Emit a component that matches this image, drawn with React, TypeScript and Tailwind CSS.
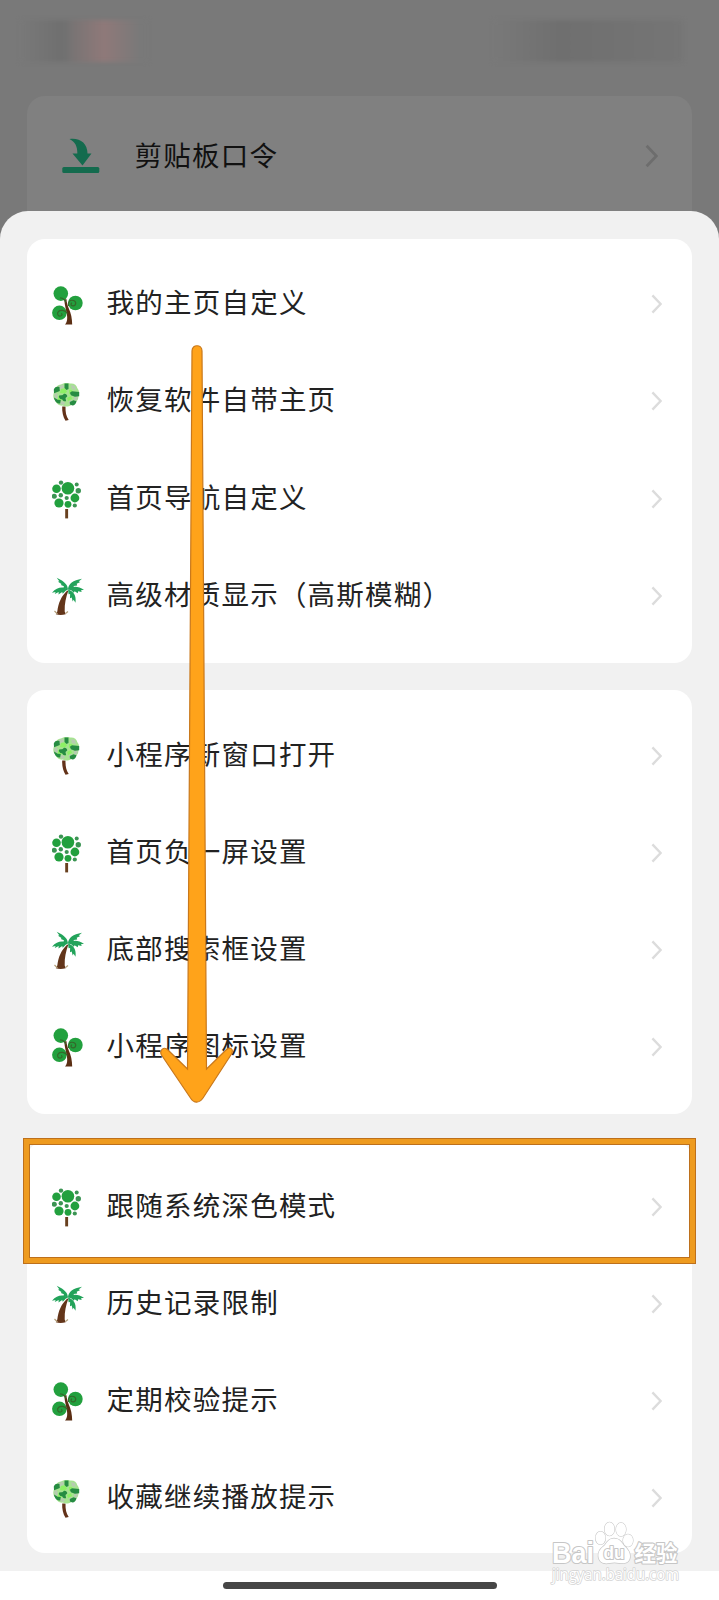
import React from 'react';

type TreeKind = 'sprout' | 'leafy' | 'dots' | 'palm';

interface MenuItem {
    icon: TreeKind;
    label: string;
}

const groups: MenuItem[][] = [
    [
        { icon: 'sprout', label: '我的主页自定义' },
        { icon: 'leafy', label: '恢复软件自带主页' },
        { icon: 'dots', label: '首页导航自定义' },
        { icon: 'palm', label: '高级材质显示（高斯模糊）' },
    ],
    [
        { icon: 'leafy', label: '小程序新窗口打开' },
        { icon: 'dots', label: '首页负一屏设置' },
        { icon: 'palm', label: '底部搜索框设置' },
        { icon: 'sprout', label: '小程序图标设置' },
    ],
    [
        { icon: 'dots', label: '跟随系统深色模式' },
        { icon: 'palm', label: '历史记录限制' },
        { icon: 'sprout', label: '定期校验提示' },
        { icon: 'leafy', label: '收藏继续播放提示' },
    ],
];

const SproutTree = () => (
    <>
        <circle cx="8.8" cy="7.600" r="7.300" fill="#22a03e" />
        <circle cx="23.400" cy="17" r="7.300" fill="#22a03e" />
        <circle cx="7.400" cy="26.800" r="7.300" fill="#22a03e" />
        <path d="M13 38.600c2.600-3 2.400-7 1.900-10.200-.6-4-2.400-9.500-2.600-15.200h2.200c.2 3.500 1 5.800 2 8.500 2.700 6 3.600 10.500 3.700 16.900z" fill="#5b2f14" />
        <path d="M13.600 16.500c-.5-3-2.500-4.500-5.500-4.700M16.500 20c-1-4 1.500-6.500 5-5.500s2.500 5.500-.5 5.300-2-2.500-1-3M15.500 27.500c-2.500-3.500-7-4-9-2s-.5 5 2 4.500 1.500-2.500.5-2.500" fill="none" stroke="#34692a" strokeWidth="1.200" />
    </>
);

const LeafyTree = () => (
    <>
        <path d="M10.200 23.500c-.3 5.500.9 10.500 3.300 14.200l3.200-.6c-2.600-4-3.300-8-3.200-13.600z" fill="#633219" />
        <path d="M9 1.500c3-1.900 7-1.900 9-.9 4-.5 6.700 1.500 7.200 4.300 2.300 2.500 2.300 6 1.200 8.500.1 4-2.500 6.500-5.900 7.500-3 3-7.300 3.200-9.700 1.700-3.800.3-6.800-2-7.300-5-2.700-2-2.700-6-1.300-8.700C2.200 5 5.300 2 9 1.500z" fill="#a6e391" />
        <path d="M6 3.500l5-2 1 3-4 2zM19 2l4 1 1 4-4-1zM2 11l3-1 1 5-3 1zM22 14l4-1-1 4-3 1zM9 18l4 1-1 3-4-1zM17 18l3-1 0 3-3 1z" fill="#b6ccb0" />
        <path d="M9 6l4-.5 2 3-2 2-5-.5zM17 7l3 0 1 3-4 1zM6 13l3 1 1 3-4 0zM15 15l4-2 1 3-4 2z" fill="#8df065" />
        <path d="M1.800 6.500c1-2.500 3-3 5.700-2.500l.3 4-5.800 2.200zM12.500.500l4-.1v5.600l-2 1.100-2-2zM7 12.800c1.200-1 3.700 0 4.700-1.900 2.400-.5 3.800 1.200 3.500 2.600l-1.700 1.500.6 3.200c-1.900.5-3.700-.7-4-2-2.200.3-3.600-1.600-3.100-3.400zM20 8.200l7.200.8v4.200l-4.300.5-4-1.500-1-2.500zM17.800 19l3.700-1.800 3 1c-.5 2.500-1.900 4.100-4.100 4.300l-2.500-1zM2 14.500l3.800 2.300 3 .2-.6 3.600c-3.200 0-5.700-2.200-6.200-6.100z" fill="#268c42" />
    </>
);

const DotsTree = () => (
    <>
        <path d="M13.200 29h2.900v9.400h-2.900z" fill="#68401f" />
        <g fill="#22a03e">
            <circle cx="15.900" cy="8.300" r="6.300" />
            <circle cx="4.500" cy="8.700" r="4.300" />
            <circle cx="22.900" cy="18" r="4.400" />
            <circle cx="7" cy="23" r="4.600" />
            <circle cx="16" cy="24.300" r="3.400" />
        </g>
        <g fill="#3b9453">
            <circle cx="9" cy="2.600" r="2.200" />
            <circle cx="24.700" cy="4.600" r="2" />
            <circle cx="26.300" cy="10.800" r="2.700" />
            <circle cx="2.300" cy="16.300" r="2.500" />
            <circle cx="8.800" cy="15.300" r="2.200" />
            <circle cx="14.700" cy="18" r="2.100" />
            <circle cx="22.800" cy="25.500" r="2.100" />
        </g>
    </>
);

const PalmTree = () => (
    <>
        <path d="M15.300 13.500c-6 5.500-9 12.500-10 21l-1.500 2.700c3.200 1 6.600.9 9.900 0l-1-2.700c-.3-8 1.300-14 3.500-20.500z" fill="#63351a" />
        <path d="M2.500 34l3 3M16 34.500l-2.500 2" stroke="#b5a07c" strokeWidth="1.200" />
        <g fill="#22a35a">
            <path d="M16 12.500c-.3-4.500-3-8-11.300-11.800l2.600 3.600-1.300.5 3.500 2.100-.6 1.200 3 1.200-.3 1.600z" />
            <path d="M16 12.500c-5-3.300-11-2.300-16 3.200l3.600-.8-.8 2.200 3.900-2-.2 2.400 3.700-2.600.5 1.800 3-3z" />
            <path d="M16 12.500c.2-5.500 5-9.300 14-10.700l-3.300 2.700 1.600.6-3.600 1.700.5 1.700-3.500.6.200 1.800z" />
            <path d="M16 12.500c5-4 10-3.500 16 .3l-3 .5.700 1.700-3.600-.8-.3 2-3.200-2-.8 1.500-2.600-2.400z" />
            <path d="M16 12.500c5.500 1.800 8.500 5.500 7.500 13.300l-1.900-3-.9 1.700-1-4.100-1.700.8.100-4.200-1.500.3z" />
        </g>
    </>
);

const trees: Record<TreeKind, React.FC> = {
    sprout: SproutTree,
    leafy: LeafyTree,
    dots: DotsTree,
    palm: PalmTree,
};

const TreeIcon = ({ kind }: { kind: TreeKind }) => {
    const Tree = trees[kind];
    return (
        <svg viewBox="0 0 34 40" className="mt-[3px] w-[34px] h-10 shrink-0">
            <Tree />
        </svg>
    );
};

const Chevron = ({ className }: { className: string }) => (
    <svg viewBox="0 0 12 22" className={className} fill="none" stroke="currentColor" strokeWidth="2.600">
        <path d="M1.500 1.500L10.500 11L1.500 20.500" />
    </svg>
);

const MenuRow = ({ icon, label }: MenuItem) => (
    <div className="flex items-center h-[97.1px] pl-[25px] pr-[30px]">
        <TreeIcon kind={icon} />
        <span className="ml-[20.500px] flex-1 whitespace-nowrap text-[27.500px] leading-10 tracking-[1.230px] text-[#222]">{label}</span>
        <Chevron className="w-[11px] h-5 text-[#dcdcdc]" />
    </div>
);

const ClipboardIcon = () => (
    <svg viewBox="0 0 38 36" className="w-[38px] h-9 shrink-0" fill="#146b4e">
        <path d="M7.500 1c10-1.500 18 4 18 14.500h4L20.500 27.500 10.500 15.500h4.800C15.500 9 13.500 4 7.500 1z" />
        <rect x="0.300" y="29" width="37" height="6" rx="1.500" />
    </svg>
);

const Watermark = () => (
    <svg viewBox="0 0 140 72" className="absolute left-[546px] top-[1518px] w-[140px] h-[72px]" fill="#fff" stroke="#c6c6c6" strokeWidth="1.100">
        <g fontFamily="'Liberation Sans', sans-serif" paintOrder="stroke" strokeLinejoin="round">
            <text x="6" y="44.500" fontSize="29" fontWeight="700" textLength="42" lengthAdjust="spacingAndGlyphs" strokeWidth="2.200">Bai</text>
            <ellipse cx="54.500" cy="20" rx="5" ry="6.500" />
            <ellipse cx="63.500" cy="11" rx="5" ry="6.700" />
            <ellipse cx="75" cy="11.500" rx="5" ry="6.700" />
            <ellipse cx="82" cy="22.500" rx="5" ry="6.200" />
            <path d="M68 20.500c-5 0-7 3.500-9 6.500-3.500 3-7.500 6-6.500 12 1 6.500 7 7 11 6 4-.8 6-.8 9.500 0 5 1 10.500 0 11-6 .5-6-4-9-6.500-12-2-3-4-6.500-9.500-6.500z" strokeWidth="1.500" />
            <text x="57.500" y="40.500" fontSize="18" fontWeight="700" textLength="21" lengthAdjust="spacingAndGlyphs" strokeWidth="2.200">du</text>
            <text x="88.500" y="42.500" fontSize="21.500" fontWeight="700" fontFamily="'Noto Sans CJK SC', sans-serif" strokeWidth="2.200">经验</text>
            <text x="6" y="62" fontSize="15.500" textLength="127" lengthAdjust="spacingAndGlyphs" strokeWidth="1.600" stroke="#d4d4d4" fontFamily="'Open Sans', sans-serif">jingyan.baidu.com</text>
        </g>
    </svg>
);

export default function App() {
    return (
        <div className="relative w-[719px] h-[1600px] overflow-hidden bg-[#797979] font-['Liberation_Sans','Noto_Sans_CJK_SC',sans-serif]">
            {/* dimmed page behind the sheet */}
            <div className="flex h-[96px] items-start justify-between pl-5 pr-[36px] pt-5">
                <div className="h-[42px] w-32 bg-linear-to-r from-[#797979] from-0% via-[#707070] via-30% to-[#797979] blur-[2px]">
                    <div className="ml-12 h-full w-18 bg-linear-to-r from-[#757373] via-[#8f7979] via-50% to-[#797979]" />
                </div>
                <div className="h-[42px] w-[190px] bg-linear-to-r from-[#797979] via-[#6f6f6f] via-35% to-[#757575] blur-[2px]" />
            </div>
            <div className="mx-[27px] h-[150px] rounded-t-[18px] bg-[#808080] pl-[35px] pr-[34px]">
                <div className="flex h-[119px] items-center">
                    <ClipboardIcon />
                    <span className="ml-[34.500px] mt-0.5 flex-1 text-[27.500px] leading-10 tracking-[1.230px] text-[#111]">剪贴板口令</span>
                    <Chevron className="w-[13px] h-6 text-[#6d6d6d]" />
                </div>
            </div>

            {/* bottom sheet */}
            <div className="relative -mt-[35px] flex h-[1360px] flex-col gap-[27px] rounded-t-[28px] bg-[#f1f1f1] px-[27px] pt-[28px]">
                {groups.map((items, i) => (
                    <div key={i} className={`rounded-[18px] bg-white pt-[16.800px] ${i === 2 ? 'h-[412px]' : 'h-[424.200px]'}`}>
                        {items.map((item) => (
                            <MenuRow key={item.label} {...item} />
                        ))}
                    </div>
                ))}
            </div>
            <div className="flex h-[29px] justify-center bg-white pt-[11px]">
                <div className="h-[7px] w-[274px] rounded-full bg-[#464646]" />
            </div>

            {/* highlight box and pointer */}
            <div className="absolute left-[23px] top-[1138px] h-[126px] w-[673px] border border-[#bd701c] bg-transparent">
                <div className="h-full w-full border-[5px] border-[#ee9b1f]">
                    <div className="h-full w-full border border-[#bd701c]" />
                </div>
            </div>
            <svg viewBox="0 0 80 765" className="absolute left-[157px] top-[341px] h-[765px] w-20">
                <path
                    d="M35 10C35 3 45 3 45 10L49.500 728L69 709C73 705 77 708 74.500 713L46 757C42 762.500 37 762.500 33.500 757L4.500 714C2 709 7 705 11 709L30.500 728Z"
                    fill="#ffa31a"
                    stroke="#c9781b"
                    strokeWidth="1.200"
                />
            </svg>
            <Watermark />
        </div>
    );
}
